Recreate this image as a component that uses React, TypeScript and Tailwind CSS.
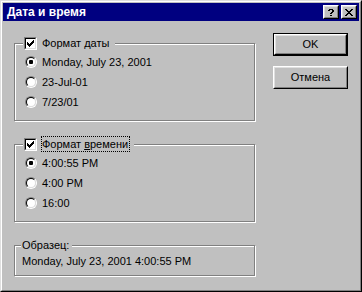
import React from "react";

const font = { fontFamily: '"Liberation Sans", Arial, sans-serif' };

function Check() {
  return (
    <span className="flex w-[13px] h-[13px] shrink-0 border border-t-[#808080] border-l-[#808080] border-b-white border-r-white">
      <span className="flex flex-1 items-center justify-center bg-white border border-t-black border-l-black border-b-[#dfdfdf] border-r-[#dfdfdf]">
        <svg width="7" height="7" viewBox="0 0 7 7" shapeRendering="crispEdges">
          <path
            d="M0 2h1v3h-1z M1 3h1v3h-1z M2 4h1v3h-1z M3 3h1v3h-1z M4 2h1v3h-1z M5 1h1v3h-1z M6 0h1v3h-1z"
            fill="#000"
          />
        </svg>
      </span>
    </span>
  );
}

function Radio({ on }: { on?: boolean }) {
  return (
    <span className="flex w-[12px] h-[12px] shrink-0 rounded-full border border-t-[#808080] border-l-[#808080] border-b-white border-r-white">
      <span className="flex flex-1 items-center justify-center rounded-full bg-white border border-t-black border-l-black border-b-[#dfdfdf] border-r-[#dfdfdf]">
        {on && <span className="w-[4px] h-[4px] rounded-[1px] bg-black" />}
      </span>
    </span>
  );
}

function Option({ label, on }: { label: string; on?: boolean }) {
  return (
    <div className="flex items-center h-[20px] pl-[10px] gap-[5px]">
      <Radio on={on} />
      <span>{label}</span>
    </div>
  );
}

const etched =
  "border border-[#808080] shadow-[inset_1px_1px_0_#fff,1px_1px_0_#fff] m-0 p-0 min-w-0";

function CheckLegend({ children, focus }: { children: React.ReactNode; focus?: boolean }) {
  return (
    <legend className="ml-[8px] pl-[1px] pr-[4px] bg-[#c0c0c0]">
      <span className="flex items-center h-[16px] gap-[4px]">
        <Check />
        <span
          className={
            focus
              ? "flex items-center h-[16px] border border-dotted border-black pr-[1px]"
              : "flex items-center h-[16px] border border-transparent pr-[1px]"
          }
        >
          {children}
        </span>
      </span>
    </legend>
  );
}

function Button({ label, def }: { label: string; def?: boolean }) {
  const face = (
    <span className="flex flex-1 border border-t-white border-l-white border-b-black border-r-black">
      <span className="flex flex-1 items-center justify-center border border-t-[#dfdfdf] border-l-[#dfdfdf] border-b-[#808080] border-r-[#808080]">
        {label}
      </span>
    </span>
  );
  return (
    <div className={def ? "flex w-[75px] h-[23px] border border-black" : "flex w-[75px] h-[23px]"}>
      {face}
    </div>
  );
}

function CapButton({ children }: { children: React.ReactNode }) {
  return (
    <span className="flex w-[16px] h-[14px] border border-t-white border-l-white border-b-black border-r-black">
      <span className="flex flex-1 items-center justify-center bg-[#c0c0c0] border border-t-[#dfdfdf] border-l-[#dfdfdf] border-b-[#808080] border-r-[#808080]">
        {children}
      </span>
    </span>
  );
}

export default function App() {
  return (
    <div className="w-[362px] h-[292px] text-[11px] text-black" style={font}>
      <div className="w-full h-full border border-t-[#dfdfdf] border-l-[#dfdfdf] border-b-black border-r-black">
        <div className="flex flex-col h-full p-[1px] bg-[#c0c0c0] border border-t-white border-l-white border-b-[#808080] border-r-[#808080]">
          {/* title bar */}
          <div className="flex items-center h-[18px] bg-[#000080] pl-[4px] pr-[2px]">
            <span className="flex-1 text-white font-bold text-[12px] leading-none">Дата и время</span>
            <div className="flex gap-[2px]">
              <CapButton>
                <svg width="6" height="7" viewBox="0 0 6 7" shapeRendering="crispEdges">
                  <path d="M1 0h4v1h-4z M0 1h2v1h-2z M4 1h2v2h-2z M3 3h2v1h-2z M2 4h2v1h-2z M2 6h2v1h-2z" fill="#000" />
                </svg>
              </CapButton>
              <CapButton>
                <svg width="8" height="7" viewBox="0 0 8 7" shapeRendering="crispEdges">
                  <path
                    d="M0 0h2v1h-2z M6 0h2v1h-2z M1 1h2v1h-2z M5 1h2v1h-2z M2 2h4v1h-4z M3 3h2v1h-2z M2 4h4v1h-4z M1 5h2v1h-2z M5 5h2v1h-2z M0 6h2v1h-2z M6 6h2v1h-2z"
                    fill="#000"
                  />
                </svg>
              </CapButton>
            </div>
          </div>

          {/* body */}
          <div className="flex items-start pl-[11px] pt-[12px]">
            <div className="flex flex-col w-[241px] mt-[2px]">
              <fieldset className={etched}>
                <CheckLegend>Формат даты</CheckLegend>
                <div className="mt-[1px] pb-[8px]">
                  <Option label="Monday, July 23, 2001" on />
                  <Option label="23-Jul-01" />
                  <Option label="7/23/01" />
                </div>
              </fieldset>

              <fieldset className={etched + " mt-[15px]"}>
                <CheckLegend focus>
                  <span>
                    Формат <u className="underline-offset-[1px]">в</u>ремени
                  </span>
                </CheckLegend>
                <div className="mt-[1px] pb-[8px]">
                  <Option label="4:00:55 PM" on />
                  <Option label="4:00 PM" />
                  <Option label="16:00" />
                </div>
              </fieldset>

              <fieldset className={etched + " mt-[17px]"}>
                <legend className="ml-[6px] pl-[1px] pr-[3px] h-[13px] leading-[13px] bg-[#c0c0c0]">Образец:</legend>
                <div className="flex items-center h-[14px] mt-[2px] mb-[7px] pl-[7px]">
                  Monday, July 23, 2001 4:00:55 PM
                </div>
              </fieldset>
            </div>

            <div className="flex flex-col gap-[10px] ml-[18px]">
              <Button label="OK" def />
              <Button label="Отмена" />
            </div>
          </div>
        </div>
      </div>
    </div>
  );
}
